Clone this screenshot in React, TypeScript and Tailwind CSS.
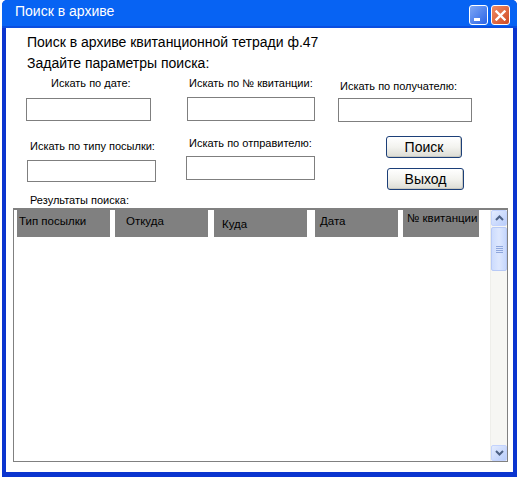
import React from "react";

const font = "font-['Liberation_Sans',Arial,sans-serif]";

function Field({ w, h }: { w: number; h: number }) {
  return (
    <div
      className="border border-[#7f7f7f] bg-white"
      style={{ width: w, height: h }}
    />
  );
}

function XPButton({ label, w, className }: { label: string; w: number; className?: string }) {
  return (
    <div
      className={`h-[22px] rounded-[3px] border border-[#1c3f78] bg-gradient-to-b from-[#ffffff] via-[#f3f3ef] to-[#dcdcd4] flex items-center justify-center text-[14px] text-black shadow-[inset_-1px_-1px_0_#c8c8c0] ${className ?? ""}`}
      style={{ width: w }}
    >
      {label}
    </div>
  );
}

function HeaderCell({
  text,
  w,
  ml,
  pl,
  pt,
}: {
  text: string;
  w: number;
  ml: string;
  pl: string;
  pt: string;
}) {
  return (
    <div
      className={`h-[27px] bg-[#808080] text-[11.5px] leading-[14px] text-black whitespace-nowrap overflow-hidden ${ml} ${pl} ${pt}`}
      style={{ width: w }}
    >
      {text}
    </div>
  );
}

export default function App() {
  return (
    <div className={`w-[519px] h-[479px] bg-white ${font}`}>
      <div className="ml-[2px] w-[515px] h-[477px] bg-[#0b35cf] rounded-t-[5px] flex flex-col">
        {/* Title bar */}
        <div className="h-[28px] bg-[#0763f3] rounded-t-[5px] border-b-[2px] border-[#0a4ee0] flex items-start justify-between">
          <div className="pl-[13px] pt-[3px] text-white text-[14px] leading-[16px]">
            Поиск в архиве
          </div>
          <div className="flex gap-[3px] pt-[5px] pr-[7px]">
            <div className="w-[19px] h-[20px] rounded-[3px] border border-white bg-gradient-to-br from-[#7ea6f4] to-[#2a63e6] relative">
              <div className="absolute left-[4px] top-[12px] w-[6px] h-[3px] bg-white" />
            </div>
            <div className="w-[19px] h-[20px] rounded-[3px] border border-white bg-gradient-to-br from-[#ef8b63] to-[#cf4a22] flex items-center justify-center">
              <svg width="11" height="11" viewBox="0 0 11 11">
                <path d="M1.5 1.5 L9.5 9.5 M9.5 1.5 L1.5 9.5" stroke="white" strokeWidth="2.4" strokeLinecap="square" />
              </svg>
            </div>
          </div>
        </div>

        {/* Client area */}
        <div className="ml-[4px] mr-[4px] w-[507px] h-[444px] bg-white flex flex-col text-black">
          <div className="pl-[21px] pt-[6px] text-[14px] leading-[16px]">
            Поиск в архиве квитанционной тетради ф.47
          </div>
          <div className="pl-[21px] pt-[5px] text-[14px] leading-[16px]">
            Задайте параметры поиска:
          </div>

          {/* Row 1 */}
          <div className="flex h-[52px] mt-[6px] text-[11px] leading-[13px]">
            <div className="ml-[20px] w-[125px] flex flex-col">
              <div className="pl-[25px] whitespace-nowrap">Искать по дате:</div>
              <div className="mt-[8px]">
                <Field w={125} h={23} />
              </div>
            </div>
            <div className="ml-[36px] w-[127px] flex flex-col">
              <div className="pl-[2px] whitespace-nowrap">Искать по № квитанции:</div>
              <div className="mt-[7px]">
                <Field w={128} h={24} />
              </div>
            </div>
            <div className="ml-[24px] w-[133px] flex flex-col">
              <div className="pl-[2px] mt-[3px] whitespace-nowrap">Искать по получателю:</div>
              <div className="mt-[5px]">
                <Field w={134} h={24} />
              </div>
            </div>
          </div>

          {/* Row 2 */}
          <div className="flex h-[65px] text-[11px] leading-[13px]">
            <div className="ml-[21px] w-[128px] flex flex-col">
              <div className="pl-[3px] mt-[11px] whitespace-nowrap">Искать по типу посылки:</div>
              <div className="mt-[7px]">
                <Field w={129} h={22} />
              </div>
            </div>
            <div className="ml-[31px] w-[128px] flex flex-col">
              <div className="pl-[3px] mt-[8px] whitespace-nowrap">Искать по отправителю:</div>
              <div className="mt-[6px]">
                <Field w={129} h={24} />
              </div>
            </div>
            <div className="ml-[72px] flex flex-col">
              <XPButton label="Поиск" w={76} className="mt-[7px]" />
              <XPButton label="Выход" w={77} className="mt-[10px] ml-[1px]" />
            </div>
          </div>

          <div className="pl-[24px] h-[14px] text-[11px] leading-[13px]">Результаты поиска:</div>

          {/* Results table */}
          <div className="ml-[7px] w-[495px] h-[254px] border border-t-2 border-[#808080] flex">
            <div className="flex-1 flex items-start">
              <HeaderCell text="Тип посылки" w={93} ml="ml-[3px]" pl="pl-[2px]" pt="pt-[4px]" />
              <HeaderCell text="Откуда" w={93} ml="ml-[5px]" pl="pl-[11px]" pt="pt-[4px]" />
              <HeaderCell text="Куда" w={93} ml="ml-[6px]" pl="pl-[8px]" pt="pt-[7px]" />
              <HeaderCell text="Дата" w={83} ml="ml-[8px]" pl="pl-[5px]" pt="pt-[4px]" />
              <HeaderCell text="№ квитанции" w={76} ml="ml-[5px]" pl="pl-[4px]" pt="pt-[1px]" />
            </div>
            {/* Scrollbar */}
            <div className="w-[17px] h-full bg-[#f6f6f3] flex flex-col border-l border-[#eeeeea]">
              <div className="h-[16px] rounded-[2px] border border-[#c3d3fd] bg-gradient-to-br from-[#e4ecfe] to-[#b9cdfb] flex items-center justify-center">
                <svg width="9" height="6" viewBox="0 0 9 6">
                  <path d="M1 5 L4.5 1.5 L8 5" stroke="#4d6185" strokeWidth="2" fill="none" />
                </svg>
              </div>
              <div className="mt-[1px] h-[44px] rounded-[2px] border border-[#b7c9f6] bg-gradient-to-r from-[#cddcfd] via-[#dde7fe] to-[#c6d7fc] flex flex-col items-center justify-center gap-[1px]">
                <div className="w-[7px] h-[1px] bg-[#8ea6dc]" />
                <div className="w-[7px] h-[1px] bg-[#8ea6dc]" />
                <div className="w-[7px] h-[1px] bg-[#8ea6dc]" />
                <div className="w-[7px] h-[1px] bg-[#8ea6dc]" />
              </div>
              <div className="flex-1" />
              <div className="h-[16px] rounded-[2px] border border-[#c3d3fd] bg-gradient-to-br from-[#e4ecfe] to-[#b9cdfb] flex items-center justify-center">
                <svg width="9" height="6" viewBox="0 0 9 6">
                  <path d="M1 1 L4.5 4.5 L8 1" stroke="#4d6185" strokeWidth="2" fill="none" />
                </svg>
              </div>
            </div>
          </div>
        </div>
      </div>
    </div>
  );
}
